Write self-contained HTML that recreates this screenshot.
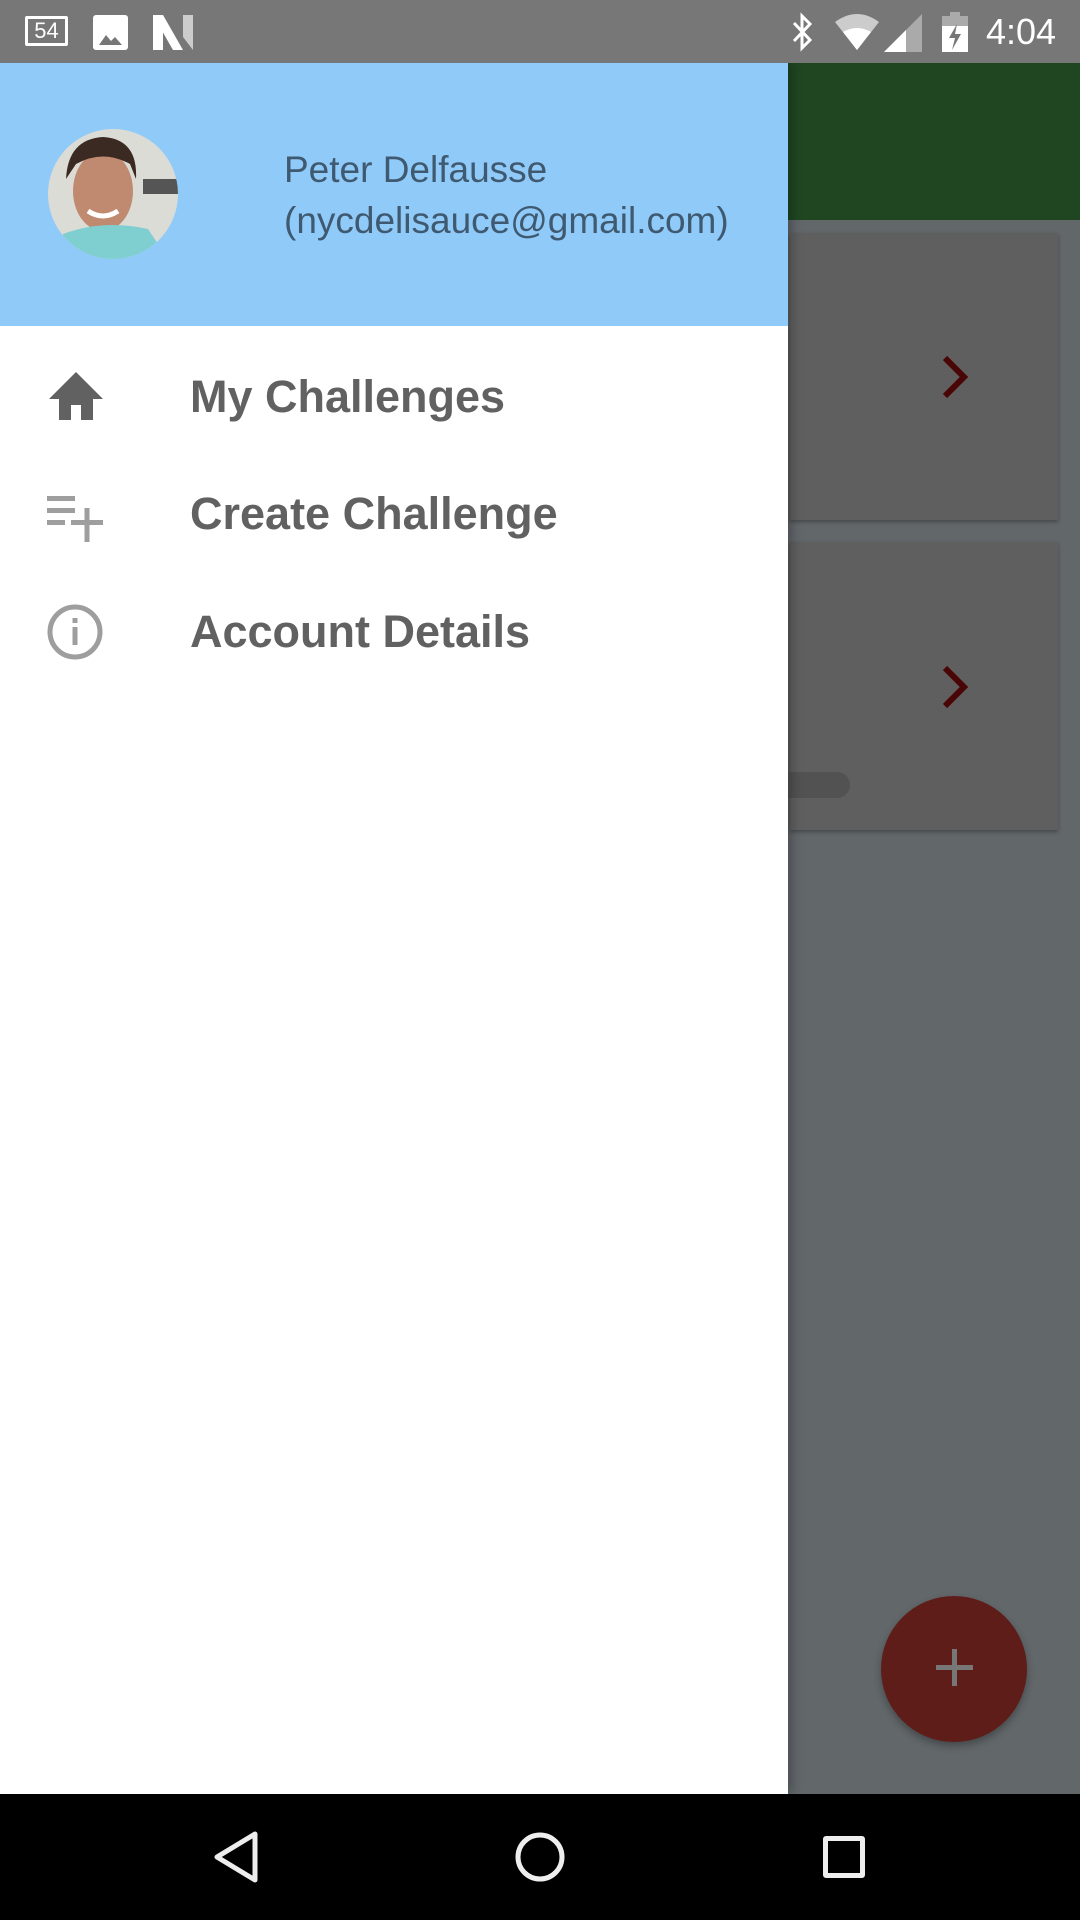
<!DOCTYPE html>
<html><head><meta charset="utf-8"><style>
*{margin:0;padding:0;box-sizing:border-box}
body{width:1080px;height:1920px;position:relative;overflow:hidden;background:#62676a;font-family:"Liberation Sans",sans-serif}
.abs{position:absolute}
</style></head><body>
<div class="abs" style="left:0;top:63px;width:1080px;height:157px;background:#1f4621"></div>
<div class="abs" style="left:790px;top:233px;width:268px;height:287px;background:#5f5f5f;box-shadow:0 2px 4px rgba(0,0,0,.3)"></div>
<div class="abs" style="left:790px;top:542px;width:268px;height:288px;background:#5f5f5f;box-shadow:0 2px 4px rgba(0,0,0,.3)"></div>
<svg class="abs" style="left:940px;top:355px" width="30" height="44"><path d="M5 3 L24 22 L5 41" stroke="#4a0606" stroke-width="6" fill="none"/></svg>
<svg class="abs" style="left:940px;top:665px" width="30" height="44"><path d="M5 3 L24 22 L5 41" stroke="#4a0606" stroke-width="6" fill="none"/></svg>
<div class="abs" style="left:760px;top:772px;width:90px;height:26px;border-radius:13px;background:#525252"></div>
<div class="abs" style="left:881px;top:1596px;width:146px;height:146px;border-radius:50%;background:#5f1d1a;box-shadow:0 4px 8px rgba(0,0,0,.3)"></div>
<div class="abs" style="left:936px;top:1665px;width:37px;height:5px;background:#777"></div>
<div class="abs" style="left:952px;top:1649px;width:5px;height:37px;background:#777"></div>
<div class="abs" style="left:0;top:63px;width:788px;height:1731px;background:#fff;box-shadow:4px 0 10px rgba(0,0,0,.25)"></div>
<div class="abs" style="left:0;top:63px;width:788px;height:263px;background:#90caf9"></div>
<svg class="abs" style="left:48px;top:129px" width="130" height="130" viewBox="0 0 130 130">
<defs><clipPath id="c"><circle cx="65" cy="65" r="65"/></clipPath></defs>
<g clip-path="url(#c)">
<rect width="130" height="130" fill="#dcdcd6"/>
<rect x="95" y="50" width="35" height="15" fill="#555"/>
<ellipse cx="55" cy="62" rx="30" ry="40" fill="#c08a70"/>
<path d="M18 50 Q20 10 55 8 Q90 10 88 50 L82 35 Q55 20 28 35 Z" fill="#3a2a22"/>
<path d="M10 130 L15 105 Q55 90 100 100 L120 130 Z" fill="#7fcfd0"/>
<path d="M40 82 Q55 92 70 82" stroke="#fff" stroke-width="5" fill="none"/>
</g></svg>
<div class="abs" style="left:284px;top:144px;font-size:37px;color:#3f5a70;line-height:51px">Peter Delfausse<br>(nycdelisauce@gmail.com)</div>
<svg class="abs" style="left:48px;top:372px" width="56" height="48" viewBox="0 0 56 48"><path d="M28 0 L55 27 L45 27 L45 48 L33 48 L33 33 L23 33 L23 48 L11 48 L11 27 L1 27 Z" fill="#616161"/></svg>
<div class="abs" style="left:190px;top:370px;font-size:45px;font-weight:bold;color:#616161;line-height:54px">My Challenges</div>
<svg class="abs" style="left:47px;top:494px" width="58" height="48" viewBox="0 0 58 48"><g fill="#9e9e9e"><rect x="0" y="2" width="28" height="5"/><rect x="0" y="14" width="28" height="5"/><rect x="0" y="26" width="18" height="5"/><rect x="24" y="26" width="32" height="5"/><rect x="37.5" y="14" width="5" height="34"/></g></svg>
<div class="abs" style="left:190px;top:487px;font-size:45px;font-weight:bold;color:#616161;line-height:54px">Create Challenge</div>
<svg class="abs" style="left:47px;top:604px" width="56" height="56" viewBox="0 0 56 56"><circle cx="28" cy="28" r="25" stroke="#9e9e9e" stroke-width="5" fill="none"/><rect x="25.5" y="23" width="5" height="18" fill="#9e9e9e"/><rect x="25.5" y="14" width="5" height="5" fill="#9e9e9e"/></svg>
<div class="abs" style="left:190px;top:605px;font-size:45px;font-weight:bold;color:#616161;line-height:54px">Account Details</div>
<div class="abs" style="left:0;top:0;width:1080px;height:63px;background:#777"></div>
<div class="abs" style="left:25px;top:16px;width:43px;height:30px;border:3px solid #fff;border-radius:2px;color:#fff;font-size:22px;text-align:center;line-height:24px">54</div>
<div class="abs" style="left:93px;top:15px;width:35px;height:35px;background:#fff;border-radius:3px"></div>
<svg class="abs" style="left:97px;top:27px" width="27" height="20"><path d="M2 18 L9 8 L14 14 L18 10 L25 18Z" fill="#777"/></svg>
<svg class="abs" style="left:153px;top:15px" width="40" height="35"><path d="M0 0 L10 0 L10 35 L0 35Z M10 0 L30 35 L20 35 L0 0Z" fill="#fff"/><path d="M30 0 L40 0 L40 35 L30 22Z" fill="#ccc"/></svg>
<svg class="abs" style="left:788px;top:12px" width="30" height="42"><path d="M6 11 L22 28 L14 36 L14 4 L22 12 L6 29" stroke="#fff" stroke-width="3" fill="none"/></svg>
<svg class="abs" style="left:833px;top:14px" width="48" height="38"><path d="M24 36 L2 8 Q24 -8 46 8 Z" fill="#ccc"/><path d="M24 36 L10 18 Q24 10 38 18 Z" fill="#fff"/></svg>
<svg class="abs" style="left:884px;top:14px" width="38" height="38"><path d="M0 38 L38 0 L38 38Z" fill="#aaa"/><path d="M0 38 L22 16 L22 38Z" fill="#fff"/></svg>
<svg class="abs" style="left:942px;top:12px" width="26" height="40"><rect x="8" y="0" width="10" height="4" fill="#aaa"/><rect x="0" y="4" width="26" height="36" fill="#fff"/><rect x="0" y="4" width="26" height="10" fill="#aaa"/><path d="M15 12 L7 26 L13 26 L10 38 L19 22 L13 22Z" fill="#777"/></svg>
<div class="abs" style="left:986px;top:9px;font-size:36px;color:#fff;line-height:46px">4:04</div>
<div class="abs" style="left:0;top:1794px;width:1080px;height:126px;background:#000"></div>
<svg class="abs" style="left:210px;top:1830px" width="52" height="54"><path d="M45 4 L45 50 L7 27Z" stroke="#eee" stroke-width="5" fill="none" stroke-linejoin="round"/></svg>
<svg class="abs" style="left:512px;top:1829px" width="56" height="56"><circle cx="28" cy="28" r="22" stroke="#eee" stroke-width="5" fill="none"/></svg>
<div class="abs" style="left:823px;top:1836px;width:42px;height:42px;border:5px solid #eee;border-radius:3px"></div>
</body></html>
